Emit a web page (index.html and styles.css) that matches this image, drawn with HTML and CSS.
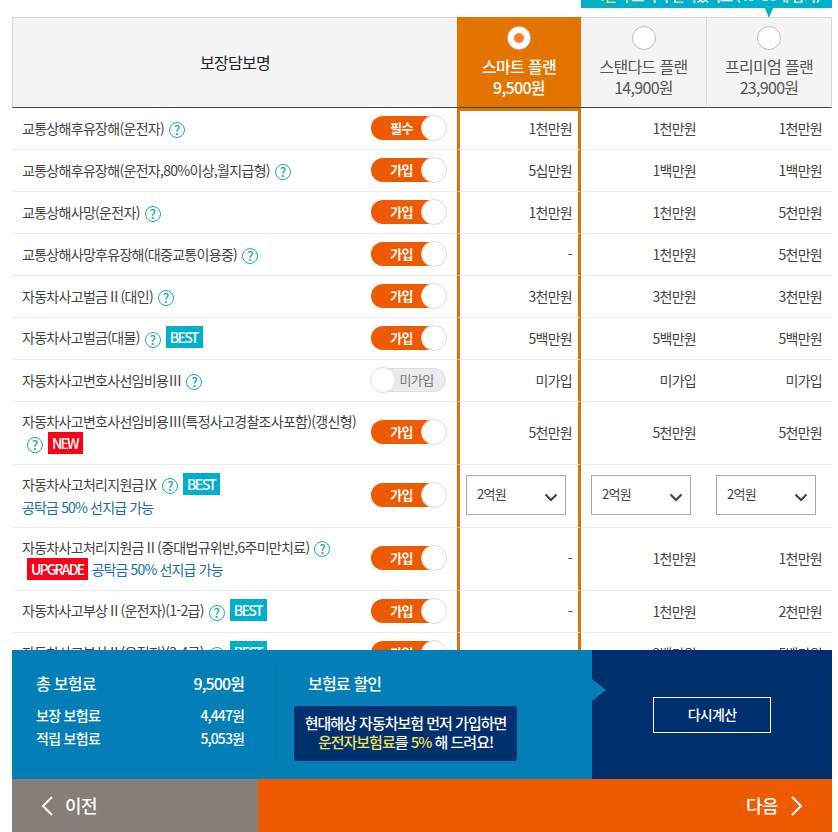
FILE: index.html
```html
<!DOCTYPE html>
<html lang="ko">
<head>
  <meta charset="UTF-8">
  <title>운전자보험 플랜 선택</title>
  <meta name="viewport" content="width=device-width, initial-scale=1">
  <link rel="stylesheet" href="styles.css">
</head>
<body>
  <div class="wrap">
    <div class="plan-area">
      <div class="tip"><em>4만여</em> 고객이 선택했어요 (40~50대 남자)</div>
      <table class="plan">
        <colgroup>
          <col class="col-name">
          <col class="col-toggle">
          <col class="col-smart">
          <col class="col-standard">
          <col class="col-premium">
        </colgroup>
        <thead>
          <tr>
            <th colspan="2" class="title">보장담보명</th>
            <th class="smart"><span class="radio on"></span>스마트 플랜<br>9,500원</th>
            <th><span class="radio"></span>스탠다드 플랜<br>14,900원</th>
            <th class="last"><span class="radio"></span>프리미엄 플랜<br>23,900원</th>
          </tr>
        </thead>
        <tbody>
          <tr>
            <td class="name">교통상해후유장해(운전자)<i class="help">?</i></td>
            <td class="join"><span class="toggle">필수</span></td>
            <td class="smart">1천만원</td><td>1천만원</td><td>1천만원</td>
          </tr>
          <tr>
            <td class="name">교통상해후유장해(운전자,80%이상,월지급형)<i class="help">?</i></td>
            <td class="join"><span class="toggle">가입</span></td>
            <td class="smart">5십만원</td><td>1백만원</td><td>1백만원</td>
          </tr>
          <tr>
            <td class="name">교통상해사망(운전자)<i class="help">?</i></td>
            <td class="join"><span class="toggle">가입</span></td>
            <td class="smart">1천만원</td><td>1천만원</td><td>5천만원</td>
          </tr>
          <tr>
            <td class="name">교통상해사망후유장해(대중교통이용중)<i class="help">?</i></td>
            <td class="join"><span class="toggle">가입</span></td>
            <td class="smart">-</td><td>1천만원</td><td>5천만원</td>
          </tr>
          <tr>
            <td class="name">자동차사고벌금Ⅱ(대인)<i class="help">?</i></td>
            <td class="join"><span class="toggle">가입</span></td>
            <td class="smart">3천만원</td><td>3천만원</td><td>3천만원</td>
          </tr>
          <tr class="badged">
            <td class="name">자동차사고벌금(대물)<i class="help">?</i><b class="tag">BEST</b></td>
            <td class="join"><span class="toggle">가입</span></td>
            <td class="smart">5백만원</td><td>5백만원</td><td>5백만원</td>
          </tr>
          <tr>
            <td class="name">자동차사고변호사선임비용Ⅲ<i class="help">?</i></td>
            <td class="join"><span class="toggle off">미가입</span></td>
            <td class="smart">미가입</td><td>미가입</td><td>미가입</td>
          </tr>
          <tr class="tall">
            <td class="name">자동차사고변호사선임비용Ⅲ(특정사고경찰조사포함)(갱신형)<br><i class="help">?</i><b class="tag red">NEW</b></td>
            <td class="join"><span class="toggle">가입</span></td>
            <td class="smart">5천만원</td><td>5천만원</td><td>5천만원</td>
          </tr>
          <tr class="tall">
            <td class="name">자동차사고처리지원금Ⅸ<i class="help">?</i><b class="tag">BEST</b><span class="note below">공탁금 50% 선지급 가능</span></td>
            <td class="join"><span class="toggle">가입</span></td>
            <td class="smart sel"><div class="select">2억원<svg width="14" height="10" viewBox="0 0 14 10"><path d="M1.5 1.5L7 7l5.5-5.5"/></svg></div></td>
            <td class="sel"><div class="select">2억원<svg width="14" height="10" viewBox="0 0 14 10"><path d="M1.5 1.5L7 7l5.5-5.5"/></svg></div></td>
            <td class="sel"><div class="select">2억원<svg width="14" height="10" viewBox="0 0 14 10"><path d="M1.5 1.5L7 7l5.5-5.5"/></svg></div></td>
          </tr>
          <tr class="tall">
            <td class="name">자동차사고처리지원금Ⅱ(중대법규위반,6주미만치료)<i class="help">?</i><br><b class="tag red">UPGRADE</b> <span class="note">공탁금 50% 선지급 가능</span></td>
            <td class="join"><span class="toggle">가입</span></td>
            <td class="smart">-</td><td>1천만원</td><td>1천만원</td>
          </tr>
          <tr class="badged">
            <td class="name">자동차사고부상Ⅱ(운전자)(1-2급)<i class="help">?</i><b class="tag">BEST</b></td>
            <td class="join"><span class="toggle">가입</span></td>
            <td class="smart">-</td><td>1천만원</td><td>2천만원</td>
          </tr>
          <tr class="badged">
            <td class="name">자동차사고부상Ⅱ(운전자)(3-4급)<i class="help">?</i><b class="tag">BEST</b></td>
            <td class="join"><span class="toggle">가입</span></td>
            <td class="smart"></td><td>2백만원</td><td>5백만원</td>
          </tr>
        </tbody>
      </table>
    </div>

    <div class="summary">
      <dl class="price">
        <div class="total"><dt>총 보험료</dt><dd>9,500원</dd></div>
        <div><dt>보장 보험료</dt><dd>4,447원</dd></div>
        <div><dt>적립 보험료</dt><dd>5,053원</dd></div>
      </dl>
      <div class="discount">
        <h2>보험료 할인</h2>
        <p>현대해상 자동차보험 먼저 가입하면<br><em>운전자보험료</em>를 <em>5%</em> 해 드려요!</p>
      </div>
      <div class="recalc">
        <button type="button">다시계산</button>
      </div>
    </div>

    <div class="nav">
      <a class="prev"><svg width="12" height="20" viewBox="0 0 12 20"><path d="M11 1L2 10l9 9"/></svg><span>이전</span></a>
      <a class="next"><span>다음</span><svg width="12" height="20" viewBox="0 0 12 20"><path d="M1 1l9 9-9 9"/></svg></a>
    </div>
  </div>
</body>
</html>
```
FILE: styles.css
```css
*,
*::before,
*::after {
  box-sizing: border-box;
}

body {
  margin: 0;
  background: #fff;
  font-family: "Noto Sans CJK KR", sans-serif;
  font-size: 14px;
  letter-spacing: -0.7px;
  color: #444;
}

em, i {
  font-style: normal;
}

.wrap {
  width: 820px;
  height: 832px;
  margin-left: 12px;
  display: flex;
  flex-direction: column;
  overflow: hidden;
}

.plan-area {
  position: relative;
  height: 650px;
  padding-top: 17px;
  overflow: hidden;
}

/* balloon above the premium plan */
.tip {
  position: absolute;
  top: -22px;
  right: 0;
  width: 251px;
  height: 30px;
  padding-left: 4px;
  line-height: 35px;
  text-align: center;
  color: #fff;
  background: #00afca;
  font-weight: 500;
  white-space: nowrap;
}

.tip em {
  color: #f4f45a;
}

.tip::after {
  content: "";
  position: absolute;
  left: 184px;
  top: 30px;
  border: 4px solid transparent;
  border-top: 10px solid #00afca;
  border-bottom: 0;
}

.plan {
  width: 820px;
  table-layout: fixed;
  border-collapse: separate;
  border-spacing: 0;
}

.col-name { width: 354px; }
.col-toggle { width: 91px; }
.col-smart { width: 124px; }
.col-standard { width: 125px; }
.col-premium { width: 126px; }

th {
  height: 91px;
  padding: 8px 0 0;
  vertical-align: top;
  background: #f4f4f4;
  border-top: 1px solid #d9d9d9;
  border-bottom: 1px solid #444;
  font-size: 16px;
  font-weight: 400;
  line-height: 21px;
  letter-spacing: -0.7px;
  color: #555;
}

th.title {
  padding: 0;
  vertical-align: middle;
  border-left: 1px solid #d9d9d9;
  color: #222;
}

th.smart {
  background: #e37400;
  border-top-color: #e37400;
  color: #fff;
  font-weight: 500;
}

th.last {
  border-left: 1px solid #d9d9d9;
  border-right: 1px solid #d9d9d9;
}

.radio {
  display: block;
  width: 24px;
  height: 24px;
  margin: 0 auto 6px;
  border: 1px solid #bbb;
  border-radius: 50%;
  background: #fff;
}

.radio.on {
  background: radial-gradient(circle, #ff7f32 4.5px, #fff 5.5px);
}

td {
  height: 42px;
  padding: 0 10px 0 0;
  border-bottom: 1px solid #ededed;
  text-align: right;
  line-height: 21px;
}

tr.tall td {
  height: 63px;
  padding-bottom: 2px;
  line-height: 22px;
}

td.name {
  padding: 0 0 0 10px;
  text-align: left;
  white-space: nowrap;
}

td.join,
.badged td.name {
  padding-bottom: 2px;
}

td.smart {
  padding-right: 6px;
  border-left: 3px solid #d9750e;
  border-right: 3px solid #d9750e;
}

tbody tr:first-child td.smart {
  border-top: 3px solid #d9750e;
  padding-bottom: 3px;
}

.help {
  display: inline-block;
  width: 16px;
  height: 16px;
  margin-left: 5px;
  border: 1px solid #1ba9b9;
  border-radius: 50%;
  color: #1ba9b9;
  font-size: 13px;
  font-weight: 500;
  line-height: 13px;
  letter-spacing: 0;
  text-align: center;
  vertical-align: -1px;
}

.badged .help {
  vertical-align: -2px;
}

.tag {
  display: inline-block;
  height: 22px;
  margin: -1px 0 -1px 5px;
  padding: 0 5px 0 4px;
  background: #00afca;
  color: #fff;
  font-weight: 500;
  line-height: 22px;
  letter-spacing: -1.6px;
}

.tag.red {
  background: #fa0019;
  letter-spacing: -1.85px;
}

.note {
  color: #1b6fa5;
  letter-spacing: -0.85px;
}

.note.below {
  display: block;
  margin-top: 1px;
}

.toggle {
  position: relative;
  display: block;
  width: 75px;
  height: 24px;
  margin-left: 5px;
  padding-right: 14px;
  border-radius: 12px;
  background: #ee5a00;
  color: #fff;
  font-size: 13px;
  font-weight: 700;
  line-height: 23px;
  text-align: center;
}

.toggle::after {
  content: "";
  position: absolute;
  top: -1px;
  right: -1px;
  width: 26px;
  height: 26px;
  border: 1px solid #ddd;
  border-radius: 50%;
  background: #fff;
}

.toggle.off {
  padding: 0 0 0 16px;
  border: 1px solid #ddd;
  background: #ebebeb;
  color: #777;
  font-weight: 400;
  line-height: 21px;
}

.toggle.off::after {
  top: -2px;
  right: auto;
  left: -2px;
}

td.sel {
  padding: 0 0 2px 10px;
}

td.smart.sel {
  padding-left: 6px;
}

.select {
  display: flex;
  align-items: center;
  justify-content: space-between;
  width: 100px;
  height: 40px;
  padding: 0 7px 2px 10px;
  border: 1px solid #aaa;
  font-size: 13px;
}

.select svg {
  margin-top: 8px;
}

.select path {
  fill: none;
  stroke: #444;
  stroke-width: 2.2;
}

.summary {
  display: flex;
  height: 129px;
  background: #047eb7;
  color: #fff;
  font-weight: 500;
}

.price {
  width: 265px;
  height: 92px;
  margin: 18px 0 0;
  padding: 3px 32px 0 24px;
  border-right: 1px solid #0a70a5;
}

.price div {
  display: flex;
  justify-content: space-between;
  line-height: 23px;
}

.price .total {
  margin-bottom: 9px;
  font-size: 16px;
  line-height: 24px;
}

.price dd {
  margin: 0;
  letter-spacing: -0.9px;
}

.discount {
  width: 315px;
  padding: 21px 0 0 17px;
}

.discount h2 {
  margin: 0 0 11px 14px;
  font-size: 16px;
  font-weight: 500;
  line-height: 24px;
  letter-spacing: -0.8px;
}

.discount p {
  width: 223px;
  height: 55px;
  margin: 0;
  padding-top: 7px;
  border-radius: 3px;
  background: #00306e;
  font-size: 15px;
  line-height: 19px;
  letter-spacing: -1px;
  text-align: center;
}

.discount em {
  color: #f0e15a;
}

.recalc {
  position: relative;
  flex: 1;
  display: flex;
  align-items: center;
  justify-content: center;
  background: #00306e;
}

.recalc::before {
  content: "";
  position: absolute;
  left: 0;
  top: 29px;
  border: 11px solid transparent;
  border-left: 14px solid #047eb7;
  border-right: 0;
}

.recalc button {
  width: 118px;
  height: 36px;
  padding: 0 0 2px;
  border: 1px solid #fff;
  background: none;
  color: #fff;
  font: inherit;
  letter-spacing: -0.7px;
}

.nav {
  display: flex;
  height: 53px;
  color: #fff;
  font-size: 18px;
  font-weight: 500;
  letter-spacing: -0.5px;
}

.nav a {
  display: flex;
  align-items: center;
}

.nav span {
  padding-bottom: 2px;
}

.nav path {
  fill: none;
  stroke: #fff;
  stroke-width: 2;
}

.prev {
  width: 246px;
  gap: 12px;
  padding-left: 29px;
  background: #857f78;
}

.next {
  flex: 1;
  justify-content: flex-end;
  gap: 13px;
  padding-right: 29px;
  background: #ee5a00;
}
```
